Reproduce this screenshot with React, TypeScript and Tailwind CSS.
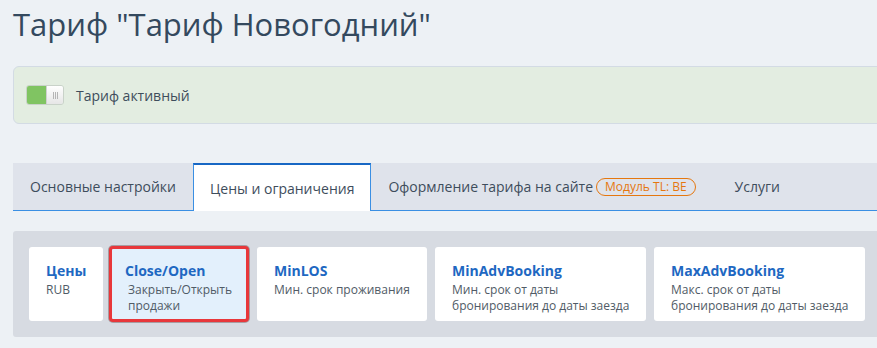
import React from "react";

const font = { fontFamily: '"Open Sans", "Noto Sans", sans-serif' };

function Toggle() {
  return (
    <div className="flex h-[20px] w-[38px] overflow-hidden rounded-[3px] border border-[#c9d2c9]">
      <div className="w-[19px] bg-[#80c462]" />
      <div className="flex flex-1 items-center justify-center gap-[1px] bg-gradient-to-b from-white to-[#e6e6e6] border-l border-[#d0d0d0]">
        <span className="h-[7px] w-px bg-[#b5b5b5]" />
        <span className="h-[7px] w-px bg-[#b5b5b5]" />
        <span className="h-[7px] w-px bg-[#b5b5b5]" />
      </div>
    </div>
  );
}

const cards = [
  { title: "Цены", sub: ["RUB"], w: "w-[74px]" },
  { title: "Close/Open", sub: ["Закрыть/Открыть", "продажи"], w: "w-[140px]", active: true },
  { title: "MinLOS", sub: ["Мин. срок проживания"], w: "w-[170px]" },
  { title: "MinAdvBooking", sub: ["Мин. срок от даты", "бронирования до даты заезда"], w: "w-[211px]" },
  { title: "MaxAdvBooking", sub: ["Макс. срок от даты", "бронирования до даты заезда"], w: "w-[211px]" },
];

export default function App() {
  return (
    <div className="h-[348px] w-full overflow-hidden bg-[#edf1f5]" style={font}>
      <div className="w-[920px] pl-[13px]">
        <h1 className="pt-[1px] text-[31px] leading-[46px] text-[#34495e]">
          Тариф "Тариф Новогодний"
        </h1>

        <div className="mt-[19px] flex h-[58px] items-center gap-[12px] rounded-[6px] border border-[#d3dbe4] bg-[#e3ede1] pl-[12px]">
          <Toggle />
          <span className="text-[14px] text-[#3e4d5c]">Тариф активный</span>
        </div>

        <div className="mt-[39px] flex h-[48px] border-b border-[#3a8fe3] bg-[#dfe3eb] text-[14px] text-[#3e4d5c]">
          <div className="flex items-center px-[17px]">Основные настройки</div>
          <div className="-mb-px flex items-center border-x border-t-2 border-x-[#3a8fe3] border-t-[#1767c4] bg-white px-[16px]">
            Цены и ограничения
          </div>
          <div className="flex items-center px-[17px]">
            Оформление тарифа на сайте
            <span className="ml-[3px] flex h-[18px] items-center rounded-full border border-[#e5770f] px-[8px] text-[12px] leading-none text-[#e5770f]">
              Модуль TL: BE
            </span>
          </div>
          <div className="flex items-center pl-[22px] pr-[17px]">Услуги</div>
        </div>

        <div className="mt-[20px] flex h-[106px] items-start gap-[8px] rounded-l-[3px] bg-[#d7dbe2] pl-[16px] pt-[16px]">
          {cards.map((c) =>
            c.active ? (
              <div
                key={c.title}
                className={`${c.w} -my-px -ml-[2px] h-[76px] rounded-[4px] border-[3px] border-[#e8373b] bg-[#e3f0fc] pl-[13px] pt-[13px] shadow-[0_0_0_1px_rgba(80,40,40,0.35)]`}
              >
                <div className="text-[14px] font-bold leading-[18px] text-[#1e68c2]">{c.title}</div>
                <div className="mt-[2px] pl-[3px] text-[12px] leading-[16px] text-[#505b66]">
                  {c.sub.map((s) => (
                    <div key={s}>{s}</div>
                  ))}
                </div>
              </div>
            ) : (
              <div
                key={c.title}
                className={`${c.w} h-[74px] rounded-[3px] bg-white pl-[17px] pt-[15px]`}
              >
                <div className="text-[14px] font-bold leading-[18px] text-[#1e68c2]">{c.title}</div>
                <div className="mt-[2px] text-[12px] leading-[16px] text-[#505b66]">
                  {c.sub.map((s) => (
                    <div key={s}>{s}</div>
                  ))}
                </div>
              </div>
            )
          )}
        </div>
      </div>
    </div>
  );
}
